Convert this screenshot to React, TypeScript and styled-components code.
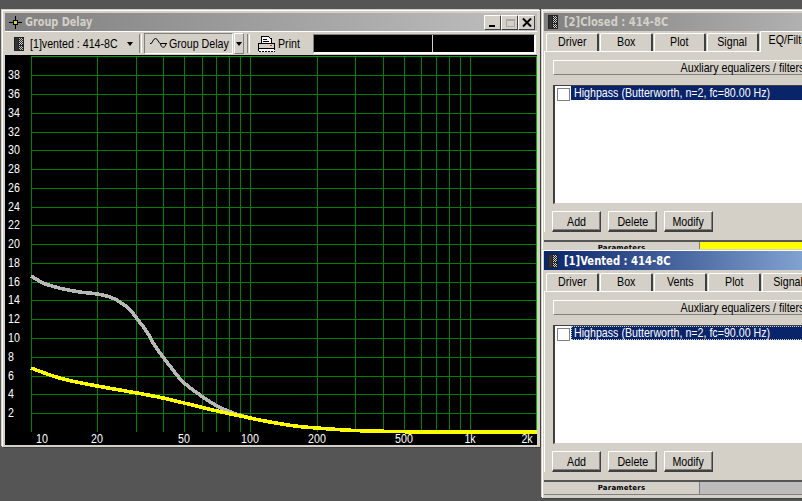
import React from "react";
import styled, { createGlobalStyle } from "styled-components";

const UI_FONT = `"Liberation Sans", Arial, sans-serif`;
const CONDENSE = 0.82;

const Global = createGlobalStyle`
  html, body { margin: 0; padding: 0; background: #555555; }
  body { font-family: ${UI_FONT}; font-size: 13px; color: #000; }
`;

const Desktop = styled.div`
  position: relative;
  width: 802px;
  height: 501px;
  overflow: hidden;
  background: #555555;
`;

const Win = styled.div<{ $x: number; $y: number; $w: number; $h: number; $pt: number; $pl: number }>`
  position: absolute;
  left: ${(p) => p.$x}px;
  top: ${(p) => p.$y}px;
  width: ${(p) => p.$w}px;
  height: ${(p) => p.$h}px;
  box-sizing: border-box;
  padding: ${(p) => p.$pt}px 3px 2px ${(p) => p.$pl}px;
  background: #d4d0c8;
  border-left: 1px solid #fff;
  border-top: 1px solid #fff;
  box-shadow: -1px -1px 0 #d4d0c8, 1px 1px 0 #404040;
  overflow: hidden;
  display: flex;
  flex-direction: column;
`;

/* The reference's system font is narrower than Arial: condense it horizontally. */
const Narrow = styled.span<{ $center?: boolean; $sx?: number }>`
  display: inline-block;
  white-space: nowrap;
  transform: scaleX(${(p) => p.$sx ?? CONDENSE});
  transform-origin: ${(p) => (p.$center ? "center" : "left")} center;
`;

const Title = styled.div<{ $active?: boolean; $h: number; $gap: number }>`
  height: ${(p) => p.$h}px;
  flex: none;
  display: flex;
  align-items: center;
  gap: ${(p) => p.$gap}px;
  padding-left: 4px;
  background: ${(p) =>
    p.$active
      ? "linear-gradient(90deg, #0a246a, #a6caf0)"
      : "linear-gradient(90deg, #808080, #c0c0c0)"};
  color: ${(p) => (p.$active ? "#ffffff" : "#d4d0c8")};
  font: bold 12px "DejaVu Sans Condensed", "DejaVu Sans", sans-serif;
  font-stretch: condensed;
  white-space: nowrap;
`;

const TitleText = styled.span`
  flex: 1;
`;

const Controls = styled.div`
  display: flex;
  align-items: center;
  padding-right: 3px;
`;

const Ctl = styled.div`
  width: 15px;
  height: 13px;
  margin-left: 1px;
  background: #d4d0c8;
  border-left: 1px solid #fff;
  border-top: 1px solid #fff;
  box-shadow: 1px 1px 0 #404040;
  display: flex;
  align-items: center;
  justify-content: center;
`;

const Toolbar = styled.div`
  flex: none;
  height: 23px;
  border-top: 1px solid #fff;
  display: flex;
  align-items: center;
  background: #d4d0c8;
  white-space: nowrap;
`;

const Combo = styled.div`
  width: 134px;
  display: flex;
  align-items: center;
  padding-left: 9px;
  box-sizing: border-box;
`;

const ComboLabel = styled.span`
  margin-left: 6px;
  width: 97px;
`;

const Caret = styled.i`
  display: block;
  width: 0;
  height: 0;
  border-left: 3px solid transparent;
  border-right: 3px solid transparent;
  border-top: 4px solid #000;
`;

const Sep = styled.div<{ $ml: number; $mr: number }>`
  width: 1px;
  height: 19px;
  margin: 0 ${(p) => p.$mr}px 0 ${(p) => p.$ml}px;
  border-left: 1px solid #808080;
  border-right: 1px solid #fff;
`;

const ModeBtn = styled.div`
  width: 89px;
  height: 21px;
  box-sizing: border-box;
  display: flex;
  align-items: center;
  gap: 2px;
  padding-left: 5px;
  border-left: 1px solid #808080;
  border-top: 1px solid #808080;
  border-right: 1px solid #fff;
  border-bottom: 1px solid #fff;
  overflow: hidden;
  svg {
    flex: none;
  }
`;

const ModeDrop = styled.div`
  width: 10px;
  height: 21px;
  margin-left: 1px;
  box-sizing: border-box;
  display: flex;
  align-items: center;
  justify-content: center;
  border-left: 1px solid #fff;
  border-top: 1px solid #fff;
  border-right: 1px solid #808080;
  border-bottom: 1px solid #808080;
`;

const PrintBtn = styled.div`
  width: 63px;
  display: flex;
  align-items: center;
  gap: 3px;
  padding-left: 8px;
  box-sizing: border-box;
  svg {
    flex: none;
  }
`;

const Display = styled.div`
  width: 223px;
  height: 20px;
  box-sizing: border-box;
  display: flex;
  background: #000;
  border-right: 2px solid #fff;
  border-bottom: 2px solid #fff;
  border-left: 1px solid #808080;
  border-top: 1px solid #808080;
`;

const DisplayCell = styled.div<{ $w: number }>`
  width: ${(p) => p.$w}px;
  height: 100%;
  border-right: 1px solid #d4d0c8;
`;

const Plot = styled.svg`
  display: block;
  flex: none;
  width: 532px;
  height: 390px;
  background: #000;
`;

const TabRow = styled.div<{ $mt: number }>`
  flex: none;
  display: flex;
  height: 18px;
  margin-top: ${(p) => p.$mt}px;
  padding-left: 2px;
  white-space: nowrap;
`;

const Tab = styled.div<{ $w: number; $active?: boolean }>`
  flex: none;
  width: ${(p) => p.$w}px;
  height: ${(p) => (p.$active ? 21 : 18)}px;
  margin-top: ${(p) => (p.$active ? -2 : 0)}px;
  margin-right: 1px;
  box-sizing: border-box;
  border-top: 1px solid #fff;
  border-left: 1px solid #fff;
  border-right: 2px solid #404040;
  border-top-left-radius: 2px;
  border-top-right-radius: 2px;
  background: #d4d0c8;
  text-align: center;
  line-height: 16px;
  position: relative;
  z-index: ${(p) => (p.$active ? 1 : 0)};
`;

const Panel = styled.div`
  flex: none;
  display: flex;
  flex-direction: column;
  align-items: flex-start;
  box-sizing: border-box;
  border-top: 1px solid #fff;
  border-left: 1px solid #fff;
  padding: 8px 0 0 7px;
`;

const Header = styled.div`
  flex: none;
  width: 378px;
  height: 15px;
  margin-left: 1px;
  box-sizing: border-box;
  border-top: 1px solid #fff;
  border-left: 1px solid #fff;
  border-bottom: 1px solid #808080;
  text-align: center;
  line-height: 13px;
  white-space: nowrap;
`;

const ListBox = styled.div`
  flex: none;
  width: 378px;
  height: 119px;
  margin: 10px 0 7px 1px;
  box-sizing: border-box;
  background: #fff;
  border-top: 1px solid #404040;
  border-left: 2px solid #404040;
  border-bottom: 1px solid #d4d0c8;
`;

const Row = styled.div`
  display: flex;
  align-items: center;
  height: 14px;
`;

const Check = styled.div`
  flex: none;
  width: 11px;
  height: 11px;
  margin: 2px 1px 0 2px;
  border: 1px solid #808080;
  background: #fff;
`;

const RowText = styled.div<{ $focus?: boolean }>`
  flex: 1;
  height: 14px;
  padding-left: 3px;
  background: #0a246a;
  color: #fff;
  line-height: 14px;
  white-space: nowrap;
  outline: ${(p) => (p.$focus ? "1px dotted #d4d0c8" : "none")};
  outline-offset: -1px;
`;

const Buttons = styled.div`
  display: flex;
  gap: 7px;
`;

const Btn = styled.div`
  width: 49px;
  height: 21px;
  box-sizing: border-box;
  border-top: 1px solid #fff;
  border-left: 1px solid #fff;
  border-right: 1px solid #404040;
  border-bottom: 2px solid #404040;
  box-shadow: inset -1px -1px 0 #808080;
  text-align: center;
  line-height: 19px;
`;

const Status = styled.div`
  flex: none;
  display: flex;
  height: 12px;
  margin-top: 8px;
  border-top: 2px solid #555;
  border-bottom: 1px solid #808080;
`;

const StatusLabel = styled.div`
  flex: none;
  width: 155px;
  border-right: 1px solid #808080;
  text-align: center;
  font: bold 7px/12px "DejaVu Sans", sans-serif;
  letter-spacing: 0.2px;
`;

const StatusFill = styled.div<{ $color: string }>`
  width: 200px;
  background: ${(p) => p.$color};
`;

const Crosshair = () => (
  <svg width="13" height="13" viewBox="0 0 13 13" shapeRendering="crispEdges">
    <rect x="0" y="6" width="13" height="1" fill="#000" />
    <rect x="6" y="0" width="1" height="13" fill="#000" />
    <rect x="4" y="4" width="5" height="5" fill="#000" />
    <rect x="5" y="5" width="3" height="3" fill="#d8d820" />
  </svg>
);

const Speaker = () => (
  <svg width="10" height="14" viewBox="0 0 10 14" shapeRendering="crispEdges">
    <defs>
      <pattern id="dith" width="2" height="2" patternUnits="userSpaceOnUse">
        <rect width="2" height="2" fill="#222" />
        <rect width="1" height="1" fill="#ccc" />
        <rect x="1" y="1" width="1" height="1" fill="#ccc" />
      </pattern>
    </defs>
    <rect width="10" height="14" fill="#222" />
    <rect x="1" y="1" width="3" height="12" fill="#333" />
    <rect x="5" y="1" width="4" height="7" fill="url(#dith)" />
    <rect x="5" y="9" width="4" height="4" fill="url(#dith)" />
  </svg>
);

const Wave = () => (
  <svg width="17" height="12" viewBox="0 0 17 12" fill="none" stroke="#000">
    <path d="M0 5.5H1C2.5 5.5 3 .5 5.5 .5S8.5 5.5 10.5 5.5H17" />
    <path d="M10.5 5.5C11 10.5 15.5 10.5 16 5.5" />
  </svg>
);

const Printer = () => (
  <svg width="17" height="16" viewBox="0 0 17 16" shapeRendering="crispEdges">
    <path d="M3.5.5H10L13.5 3V7.5H3.5Z" fill="#fff" stroke="#000" />
    <rect x="5" y="3" width="4" height="1" fill="#000" />
    <rect x="5" y="5" width="6" height="1" fill="#000" />
    <rect x="0.5" y="7.5" width="16" height="5" fill="#d4d0c8" stroke="#000" />
    <rect x="12" y="9" width="2" height="1" fill="#e02020" />
    <rect x="0.5" y="12.5" width="16" height="3" fill="#fff" stroke="#000" strokeDasharray="2 1" />
  </svg>
);

const MinIcon = () => (
  <svg width="9" height="9" viewBox="0 0 9 9" shapeRendering="crispEdges">
    <rect x="1" y="7" width="6" height="2" fill="#000" />
  </svg>
);
const MaxIcon = () => (
  <svg width="10" height="9" viewBox="0 0 10 9" shapeRendering="crispEdges" fill="none">
    <rect x="1.5" y="1.5" width="8" height="7" stroke="#a8a8a8" />
    <rect x="1" y="1" width="9" height="2" fill="#a8a8a8" />
  </svg>
);
const CloseIcon = () => (
  <svg width="10" height="9" viewBox="0 0 10 9" stroke="#000" strokeWidth="2">
    <path d="M1 0.5L9 8.5M9 0.5L1 8.5" />
  </svg>
);

const GRID_X = [31, 97, 136, 163, 184, 202, 216, 229, 240, 250, 317, 355, 383, 404, 421, 436, 449, 460, 470];
const GRID_Y = [413, 394, 376, 357, 338, 319, 300, 282, 263, 244, 225, 207, 188, 169, 150, 132, 113, 94, 75];
const X_LABELS: [string, number][] = [["10", 42], ["20", 97], ["50", 184], ["100", 250], ["200", 317], ["500", 404], ["1k", 470], ["2k", 527]];

type Pt = [number, number];
const GRAY: Pt[] = [[31, 276], [43, 283], [52, 286], [63, 289], [80, 292], [97, 294], [110, 297], [120, 302], [130, 310], [138, 320], [147, 332], [155, 346], [163, 357], [173, 370], [183, 382], [200, 395], [217, 406], [233, 413], [250, 418]];
const YELLOW: Pt[] = [[31, 368], [50, 375], [67, 380], [97, 386], [137, 393], [163, 398], [184, 403], [217, 411], [250, 418], [270, 422], [295, 426], [317, 428], [345, 430], [370, 431], [430, 432], [537, 432]];

const smooth = (pts: Pt[]) => {
  let d = `M${pts[0][0]} ${pts[0][1]}`;
  for (let i = 0; i < pts.length - 1; i++) {
    const p0 = pts[Math.max(0, i - 1)];
    const p1 = pts[i];
    const p2 = pts[i + 1];
    const p3 = pts[Math.min(pts.length - 1, i + 2)];
    const c1x = p1[0] + (p2[0] - p0[0]) / 6;
    const c1y = p1[1] + (p2[1] - p0[1]) / 6;
    const c2x = p2[0] - (p3[0] - p1[0]) / 6;
    const c2y = p2[1] - (p3[1] - p1[1]) / 6;
    d += `C${c1x} ${c1y} ${c2x} ${c2y} ${p2[0]} ${p2[1]}`;
  }
  return d;
};

const Chart = () => (
  <Plot viewBox="5 55 532 390">
    {GRID_X.map((x) => (
      <line key={x} x1={x + 0.5} x2={x + 0.5} y1={56} y2={432} stroke="#008000" shapeRendering="crispEdges" />
    ))}
    {GRID_Y.map((y) => (
      <line key={y} x1={31} x2={536} y1={y + 0.5} y2={y + 0.5} stroke="#008000" shapeRendering="crispEdges" />
    ))}
    <line x1={31} x2={537} y1={56.5} y2={56.5} stroke="#00a000" shapeRendering="crispEdges" />
    <line x1={536.5} x2={536.5} y1={56} y2={432} stroke="#00b000" shapeRendering="crispEdges" />
    <path d={smooth(GRAY)} fill="none" stroke="#b8b8b8" strokeWidth="3.6" shapeRendering="crispEdges" />
    <path d={smooth(YELLOW)} fill="none" stroke="#ffff00" strokeWidth="3.6" shapeRendering="crispEdges" />
    {GRID_Y.map((y, i) => (
      <text key={y} transform={`translate(8 ${y + 4}) scale(${CONDENSE} 1)`} fill="#fff" fontSize="13" fontFamily={UI_FONT}>
        {(i + 1) * 2}
      </text>
    ))}
    {X_LABELS.map(([t, x]) => (
      <text key={t} transform={`translate(${x} 443) scale(${CONDENSE} 1)`} fill="#fff" fontSize="13" textAnchor="middle" fontFamily={UI_FONT}>
        {t}
      </text>
    ))}
  </Plot>
);

type SideProps = {
  y: number;
  h: number;
  pt: number;
  titleH: number;
  tabsMt: number;
  active?: boolean;
  title: string;
  tabs: [string, number, boolean?][];
  fc: string;
  fill: string;
};

const Side = ({ y, h, pt, titleH, tabsMt, active, title, tabs, fc, fill }: SideProps) => (
  <Win $x={542} $y={y} $w={345} $h={h} $pt={pt} $pl={1}>
    <Title $active={active} $h={titleH} $gap={6}>
      <Speaker />
      <TitleText>
        <Narrow $sx={0.93}>{title}</Narrow>
      </TitleText>
    </Title>
    <TabRow $mt={tabsMt}>
      {tabs.map(([t, w, a]) => (
        <Tab key={t} $w={w} $active={a}>
          <Narrow $center>{t}</Narrow>
        </Tab>
      ))}
    </TabRow>
    <Panel>
      <Header>
        <Narrow $center>Auxliary equalizers / filters</Narrow>
      </Header>
      <ListBox>
        <Row>
          <Check />
          <RowText $focus={active}>
            <Narrow>Highpass (Butterworth, n=2, fc={fc} Hz)</Narrow>
          </RowText>
        </Row>
      </ListBox>
      <Buttons>
        <Btn>
          <Narrow $center>Add</Narrow>
        </Btn>
        <Btn>
          <Narrow $center>Delete</Narrow>
        </Btn>
        <Btn>
          <Narrow $center>Modify</Narrow>
        </Btn>
      </Buttons>
    </Panel>
    <Status>
      <StatusLabel>Parameters</StatusLabel>
      <StatusFill $color={fill} />
    </Status>
  </Win>
);

export default function App() {
  return (
    <Desktop>
      <Global />
      <Win $x={2} $y={10} $w={538} $h={437} $pt={2} $pl={2}>
        <Title $h={18} $gap={3}>
          <Crosshair />
          <TitleText>
            <Narrow $sx={0.9}>Group Delay</Narrow>
          </TitleText>
          <Controls>
            <Ctl>
              <MinIcon />
            </Ctl>
            <Ctl>
              <MaxIcon />
            </Ctl>
            <Ctl>
              <CloseIcon />
            </Ctl>
          </Controls>
        </Title>
        <Toolbar>
          <Combo>
            <Speaker />
            <ComboLabel>
              <Narrow>[1]vented : 414-8C</Narrow>
            </ComboLabel>
            <Caret />
          </Combo>
          <Sep $ml={0} $mr={2} />
          <ModeBtn>
            <Wave />
            <Narrow>Group Delay</Narrow>
          </ModeBtn>
          <ModeDrop>
            <Caret />
          </ModeDrop>
          <Sep $ml={3} $mr={0} />
          <PrintBtn>
            <Printer />
            <Narrow>Print</Narrow>
          </PrintBtn>
          <Display>
            <DisplayCell $w={118} />
          </Display>
        </Toolbar>
        <Chart />
      </Win>
      <Side
        y={10}
        h={240}
        pt={2}
        titleH={18}
        tabsMt={2}
        title="[2]Closed : 414-8C"
        tabs={[["Driver", 53], ["Box", 53], ["Plot", 52], ["Signal", 52], ["EQ/Filter", 60, true]]}
        fc="80.00"
        fill="#ffff00"
      />
      <Side
        y={250}
        h={248}
        pt={0}
        titleH={19}
        tabsMt={3}
        active
        title="[1]Vented : 414-8C"
        tabs={[["Driver", 53], ["Box", 53], ["Vents", 53], ["Plot", 53], ["Signal", 53]]}
        fc="90.00"
        fill="#bcbcbc"
      />
    </Desktop>
  );
}
